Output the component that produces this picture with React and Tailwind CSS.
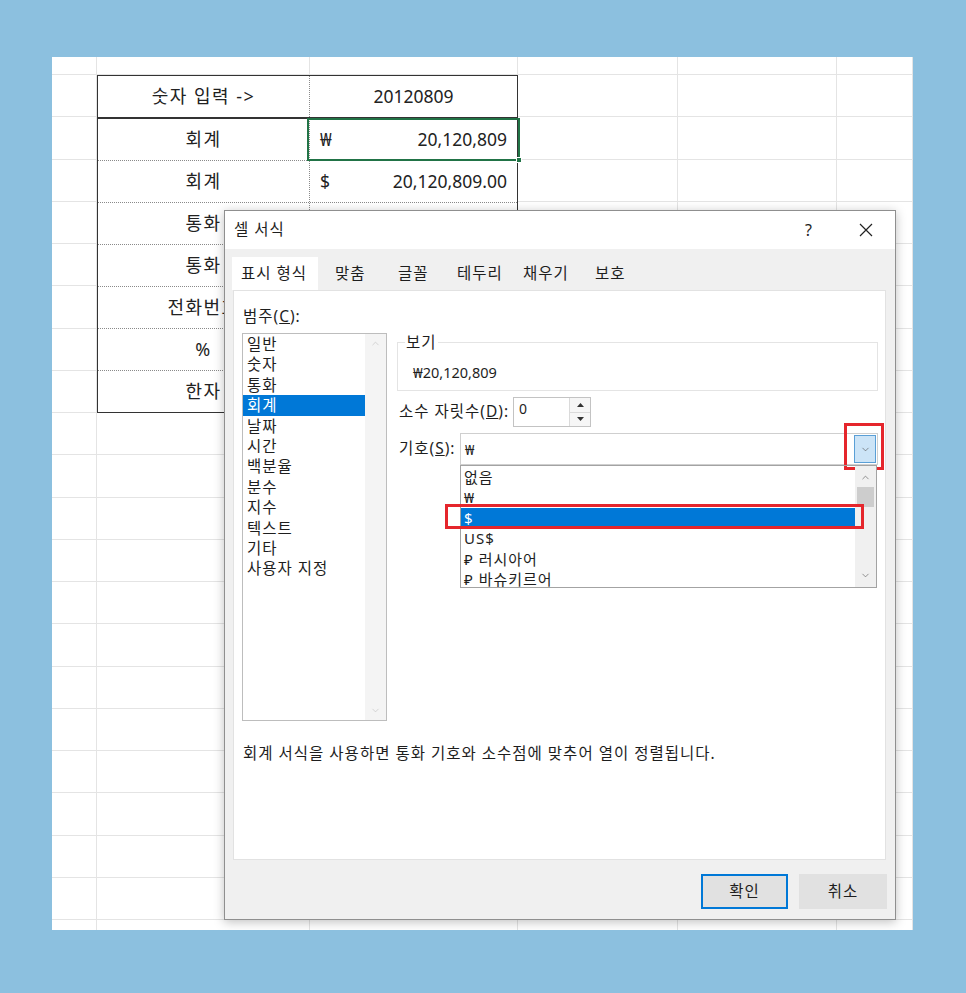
import { ChevronDown, ChevronUp } from "lucide-react";

const cats = [
  "일반",
  "숫자",
  "통화",
  "회계",
  "날짜",
  "시간",
  "백분율",
  "분수",
  "지수",
  "텍스트",
  "기타",
  "사용자 지정",
];

const symbols = ["없음", "₩", "$", "US$", "₽ 러시아어", "₽ 바슈키르어"];

const tableRows = [
  { label: "숫자 입력 ->", value: "20120809" },
  { label: "회계", sym: "₩", value: "20,120,809", selected: true },
  { label: "회계", sym: "$", value: "20,120,809.00" },
  { label: "통화" },
  { label: "통화" },
  { label: "전화번호" },
  { label: "%" },
  { label: "한자" },
];

const tabs = [
  { label: "표시 형식", cls: "w-[86px] pl-[9px] bg-white" },
  { label: "맞춤", cls: "w-[71px] pl-[17px]" },
  { label: "글꼴", cls: "w-[59px] pl-[9px]" },
  { label: "테두리", cls: "w-[66px] pl-[9px]" },
  { label: "채우기", cls: "w-[72px] pl-[9px]" },
  { label: "보호", cls: "w-[60px] pl-[9px]" },
];

const SheetTable = () => (
  <div className="col-start-2 col-span-2 row-start-2 row-span-8 flex flex-col bg-white border-[1.5px] border-[#333] text-[18px] text-[#222]">
    {tableRows.map((row, i) => (
      <div
        key={i}
        className={
          "flex flex-1 " +
          (i === 0
            ? "border-b-2 border-[#333]"
            : i < tableRows.length - 1
            ? "border-b border-dotted border-[#8a8a8a]"
            : "")
        }
      >
        <div className="w-[212px] flex items-center justify-center tracking-[1.5px] border-r border-dotted border-[#8a8a8a]">
          {row.label}
        </div>
        <div className="relative flex-1 flex items-center px-[10px] text-[17.5px]">
          {row.sym ? (
            <div className="flex w-full justify-between">
              <span>{row.sym}</span>
              <span>{row.value}</span>
            </div>
          ) : (
            <div className="w-full text-center">{row.value}</div>
          )}
          {row.selected && (
            <div className="absolute -left-[3px] -right-[3px] -top-[1px] -bottom-[1px] border-2 border-[#217346]">
              <div className="absolute -right-[4px] -bottom-[4px] w-[6px] h-[6px] bg-[#217346] border border-white" />
            </div>
          )}
        </div>
      </div>
    ))}
  </div>
);

const Dialog = () => (
  <div className="absolute left-[172px] top-[153px] w-[672px] h-[710px] flex flex-col bg-[#f0f0f0] border border-[#8f8f8f] shadow-[0_2px_10px_rgba(0,0,0,0.25)] text-[15.5px] tracking-[1px] text-[#1e1e1e]">
    <div className="h-[38px] flex items-center bg-white pl-[9px]">
      <span>셀 서식</span>
      <span className="ml-auto mr-[46px] text-[16px]">?</span>
      <svg width="14" height="14" viewBox="0 0 14 14" className="mr-[22px]">
        <path d="M1 1L13 13M13 1L1 13" stroke="#222" strokeWidth="1.2" />
      </svg>
    </div>

    <div className="h-[41px] flex items-end pl-[7px]">
      {tabs.map((t) => (
        <div key={t.label} className={"h-[33px] flex items-center " + t.cls}>
          {t.label}
        </div>
      ))}
    </div>

    <div className="ml-[8px] mr-[9px] h-[570px] bg-white border border-[#e2e2e2] pl-[8px] pt-[15px]">
      <div className="flex items-start">
        <div className="w-[145px]">
          <div className="leading-[20px] pl-[1px]">
            범주(<span className="underline">C</span>):
          </div>
          <div className="mt-[7px] h-[388px] flex border border-[#bdbdbd]">
            <div className="flex-1 leading-[20.4px]">
              {cats.map((c) => (
                <div
                  key={c}
                  className={
                    "pl-[4px] " + (c === "회계" ? "bg-[#0078d7] text-white" : "")
                  }
                >
                  {c}
                </div>
              ))}
            </div>
            <div className="w-[21px] bg-[#f4f4f4] flex flex-col items-center justify-between py-[4px]">
              <ChevronUp size={11} strokeWidth={1.5} color="#c4c4c4" />
              <ChevronDown size={11} strokeWidth={1.5} color="#c4c4c4" />
            </div>
          </div>
        </div>

        <div className="ml-[10px] w-[481px]">
          <fieldset className="mt-[26px] h-[59px] border border-[#e4e4e4]">
            <legend className="ml-[7px] px-[1px] leading-[20px]">보기</legend>
            <div className="pl-[15px] pt-[10px] text-[14.5px] tracking-normal leading-[20px]">
              ₩20,120,809
            </div>
          </fieldset>

          <div className="mt-[6px] h-[30px] flex items-center">
            <div className="w-[116px] pl-[2px]">
              소수 자릿수(<span className="underline">D</span>):
            </div>
            <div className="w-[78px] h-[30px] flex border border-[#c3c3c3]">
              <div className="flex-1 pl-[5px] text-[14px] leading-[22px]">0</div>
              <div className="w-[21px] flex flex-col border-l border-[#dadada] bg-[#f6f6f6]">
                <div className="flex-1 flex items-center justify-center border-b border-[#dadada]">
                  <svg width="7" height="4" viewBox="0 0 7 4">
                    <path d="M0 4L3.5 0L7 4Z" fill="#333" />
                  </svg>
                </div>
                <div className="flex-1 flex items-center justify-center">
                  <svg width="7" height="4" viewBox="0 0 7 4">
                    <path d="M0 0L3.5 4L7 0Z" fill="#333" />
                  </svg>
                </div>
              </div>
            </div>
          </div>

          <div className="mt-[6px] h-[32px] flex items-center">
            <div className="w-[63px] pl-[2px]">
              기호(<span className="underline">S</span>):
            </div>
            <div className="relative w-[418px] h-[32px] flex items-center border border-[#cfcfcf]">
              <span className="pl-[4px] text-[14px]">₩</span>
              <div className="ml-auto mr-[1px] w-[22px] h-[28px] flex items-center justify-center bg-[#cce4f7] border border-[#5a9fd6]">
                <ChevronDown size={11} strokeWidth={1.4} color="#555" />
              </div>
              <div className="absolute left-[383px] -top-[11px] w-[40px] h-[47px] border-[3px] border-[#e5262c]" />
            </div>
          </div>

          <div className="relative ml-[63px] w-[417px] h-[123px] flex border border-[#a3a3a3]">
            <div className="flex-1 pt-[1px] leading-[20.4px] text-[15px]">
              {symbols.map((s) => (
                <div
                  key={s}
                  className={
                    "pl-[3px] " + (s === "$" ? "bg-[#0078d7] text-white" : "")
                  }
                >
                  {s}
                </div>
              ))}
            </div>
            <div className="w-[21px] bg-[#f0f0f0] flex flex-col items-center py-[6px]">
              <ChevronUp size={11} strokeWidth={1.5} color="#666" />
              <div className="mt-[4px] w-[17px] h-[20px] bg-[#cdcdcd]" />
              <ChevronDown size={11} strokeWidth={1.5} color="#666" className="mt-auto" />
            </div>
            <div className="absolute -left-[16px] top-[38px] w-[419px] h-[25px] border-[3px] border-[#e5262c]" />
          </div>
        </div>
      </div>

      <div className="mt-[22px] pl-[1px] leading-[20px]">
        회계 서식을 사용하면 통화 기호와 소수점에 맞추어 열이 정렬됩니다.
      </div>
    </div>

    <div className="flex justify-end gap-[11px] pr-[8px] pt-[14px]">
      <button className="w-[87px] h-[35px] bg-[#e1e1e1] border-2 border-[#0078d7] tracking-[1px]">
        확인
      </button>
      <button className="w-[88px] h-[35px] bg-[#e1e1e1] border border-[#e1e1e1] tracking-[1px]">
        취소
      </button>
    </div>
  </div>
);

export default function App() {
  const cells = [];
  for (let r = 0; r < 22; r++) {
    for (let c = 0; c < 6; c++) {
      cells.push(
        <div key={r + "-" + c} className="border-r border-b border-[#e4e4e4]" />
      );
    }
  }

  return (
    <div className="w-[966px] h-[993px] bg-[#8cc0df] pt-[57px] pl-[52px] font-['Noto_Sans','Noto_Sans_CJK_KR',sans-serif]">
      <div className="relative w-[861px] h-[873px] bg-white overflow-hidden">
        <div className="grid grid-cols-[45px_213px_208px_160px_159px_76px] grid-rows-[18px_repeat(21,42.25px)]">
          {cells}
          <SheetTable />
        </div>
        <Dialog />
      </div>
    </div>
  );
}
